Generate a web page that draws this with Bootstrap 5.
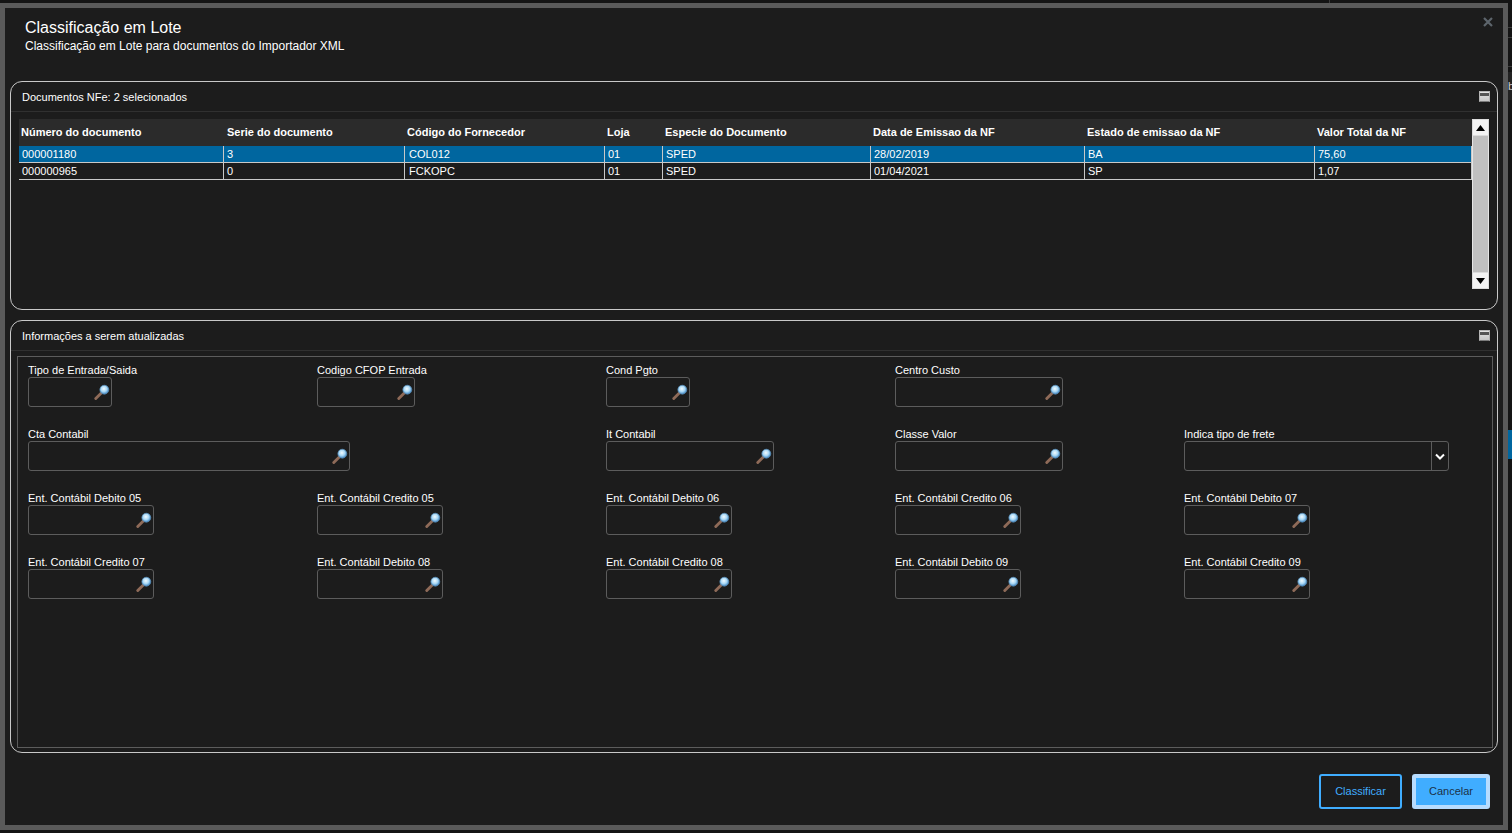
<!DOCTYPE html>
<html lang="pt-BR">
<head>
<meta charset="utf-8">
<title>Classificação em Lote</title>
<link href="https://cdn.jsdelivr.net/npm/bootstrap@5.3.0/dist/css/bootstrap.min.css" rel="stylesheet">
<style>
html,body{height:100%;overflow:hidden}
body{background:#141414;font-family:"Liberation Sans",Arial,sans-serif;color:#fff;font-size:11px;line-height:1}
.behind{position:absolute;background:#3a3a3a}
.behind-blue{right:0;top:430px;width:4px;height:29px;background:#00669f}
.behind-band{right:0;top:72px;width:4px;height:28px;background:#222}
.behind-b{right:0;top:81px;width:4px;height:11px;overflow:hidden;background:none;color:#ccc;font-size:11px}
.behind-line{right:0;top:27px;width:4px;height:1px}
.behind-line1{right:0;top:37px;width:4px;height:1px}
.behind-line2{right:0;top:66px;width:4px;height:1px}
.behind-top{left:1329px;top:0;width:1px;height:3px}
.dlg{position:absolute;left:0;top:3px;width:1508px;height:827px;background:#1c1c1c;border:5px solid #5a5a5a;display:flex;flex-direction:column;padding:0 5px}
.dlg-head{height:73px;padding:10px 0 0 15px;flex:none;position:relative}
.dlg-title{font-size:16px;line-height:18px;margin:0;font-weight:400;color:#fff;padding-top:1px}
.dlg-sub{font-size:12px;line-height:14px;margin-top:2px;color:#fff}
.dlg-x{position:absolute;right:4px;top:8px;width:12px;height:12px;padding:0;border:0;background:none;display:flex}
.pane{background:transparent;border:1px solid #c8c8c8;border-radius:12px;color:#fff;flex:none}
.pane-docs{height:229px;margin-bottom:10px}
.pane-info{height:433px}
.pane-head{height:30px;background:transparent;border:0;border-bottom:1px solid #303030;border-radius:0;padding:2px 6px 0 11px;display:flex;align-items:center;justify-content:space-between;font-size:11px;color:#fff}
.pane-head:first-child{border-radius:12px 12px 0 0}
.pane-min{width:11px;height:11px;background:linear-gradient(#e4e4e4,#c6c6c6);border:1px solid #b5b5b5;border-bottom-color:#7a7a7a;margin:-2px 1px 0 0;display:block}
.pane-min span{display:block;height:3px;margin-top:1px;background:#555}
.docs-wrap{display:flex;align-items:flex-start;padding:7px 8px 0 8px}
.docs-table{width:1453px;table-layout:fixed;border-collapse:separate;border-spacing:0;margin:0;color:#fff;font-size:11px;flex:none}
.docs-table th{background:#2b2b2b;height:27px;padding:0 2px;font-weight:700;vertical-align:middle;color:#fff;border:0}
.docs-table td{height:17px;padding:0 2px 0 3px;background:#1c1c1c;border:0;border-bottom:1px solid #c8c8c8;border-right:1px solid #c8c8c8;color:#fff;vertical-align:middle}
.docs-table td:nth-child(3){padding-left:4px}
.docs-table th:nth-child(2){padding-left:3px}
.docs-table tr.sel td{background:#00669f}
.scroll{width:17px;height:170px;background:#c0c0c0;display:flex;flex-direction:column;justify-content:space-between;flex:none}
.scroll-btn{height:17px;background:#f4f4f4;border:1px solid #ddd;display:flex;align-items:center;justify-content:center}
.scroll-gut{flex:1;border-left:1px solid #e5e5e5;border-right:1px solid #e5e5e5}
.frame{margin:5px 4px 0 6px;height:392px;border:1px solid #5c5c5c;padding:5px 10px;display:grid;grid-template-columns:repeat(5,289px);grid-auto-rows:64px}
.fld label{display:block;height:15px;line-height:16px;font-size:11px;color:#fff;white-space:nowrap;margin:0}
.fbox{height:30px;background:#1c1c1c;border:1px solid #5c5c5c;border-radius:3px;display:flex;align-items:center;justify-content:flex-end;padding:0 1px 0 0}
.fbox>svg{filter:blur(.3px)}
.w84{width:84px}.w98{width:98px}.w168{width:168px}.w126{width:126px}.w322{width:322px}.w265{width:265px}
.fspan2{grid-column:span 2}
.fselect{justify-content:flex-end;padding:0}
.fcaret{width:17px;height:100%;border-left:1px solid #5c5c5c;display:flex;align-items:center;justify-content:center}
.dlg-foot{flex:1;display:flex;justify-content:flex-end;align-items:flex-start;gap:10px;padding:21px 8px 0 0}
.act{height:35px;font-size:11px;line-height:1;border-radius:3px;padding:0;--bs-btn-font-size:11px}
.act-out{width:83px;background:transparent;border:2px solid #40adff;color:#40adff}
.act-out:hover{background:transparent;color:#40adff;border-color:#40adff}
.act-fill{width:78px;background:#40adff;border:4px solid #b7dcff;color:#1b3147}
.act-fill:hover{background:#40adff;color:#1b3147;border-color:#b7dcff}
</style>
</head>
<body>
<div class="behind behind-top"></div>
<div class="behind behind-line"></div>
<div class="behind behind-line1"></div>
<div class="behind behind-line2"></div>
<div class="behind behind-band"></div>
<div class="behind behind-b">b</div>
<div class="behind behind-blue"></div>
<svg width="0" height="0" class="d-block" aria-hidden="true"><defs>
<radialGradient id="lens" cx="45%" cy="40%" r="60%"><stop offset="0" stop-color="#f2fbff"/><stop offset=".55" stop-color="#a9d8f5"/><stop offset="1" stop-color="#3f86c4"/></radialGradient>
<symbol id="mag" viewBox="0 0 18 18"><path d="M2 16.2 8.2 10" stroke="#8e6a58" stroke-width="3.2" stroke-linecap="round" fill="none"/><circle cx="11.6" cy="6.4" r="5" fill="url(#lens)" stroke="#5d93bd" stroke-width=".8"/></symbol>
</defs></svg>
<div class="dlg">
  <div class="dlg-head">
    <h5 class="dlg-title">Classificação em Lote</h5>
    <div class="dlg-sub">Classificação em Lote para documentos do Importador XML</div>
    <button class="dlg-x" type="button" aria-label="Fechar"><svg width="12" height="12" viewBox="0 0 12 12"><path d="M2 2l8 8M10 2l-8 8" stroke="#5d656c" stroke-width="2.2"/></svg></button>
  </div>
  <div class="card pane pane-docs">
    <div class="card-header pane-head"><span>Documentos NFe: 2 selecionados</span><span class="pane-min"><span></span></span></div>
    <div class="docs-wrap">
      <table class="docs-table">
        <colgroup><col style="width:205px"><col style="width:181px"><col style="width:200px"><col style="width:58px"><col style="width:208px"><col style="width:214px"><col style="width:230px"><col style="width:157px"></colgroup>
        <thead><tr><th>Número do documento</th><th>Serie do documento</th><th>Código do Fornecedor</th><th>Loja</th><th>Especie do Documento</th><th>Data de Emissao da NF</th><th>Estado de emissao da NF</th><th>Valor Total da NF</th></tr></thead>
        <tbody>
          <tr class="sel"><td>000001180</td><td>3</td><td>COL012</td><td>01</td><td>SPED</td><td>28/02/2019</td><td>BA</td><td>75,60</td></tr>
          <tr><td>000000965</td><td>0</td><td>FCKOPC</td><td>01</td><td>SPED</td><td>01/04/2021</td><td>SP</td><td>1,07</td></tr>
        </tbody>
      </table>
      <div class="scroll">
        <div class="scroll-btn"><svg width="9" height="6" viewBox="0 0 9 6"><path d="M4.5 0 9 6H0z" fill="#000"/></svg></div>
        <div class="scroll-gut"></div>
        <div class="scroll-btn"><svg width="9" height="6" viewBox="0 0 9 6"><path d="M0 0h9L4.500 6z" fill="#000"/></svg></div>
      </div>
    </div>
  </div>
  <div class="card pane pane-info">
    <div class="card-header pane-head"><span>Informações a serem atualizadas</span><span class="pane-min"><span></span></span></div>
    <div class="frame">
      <div class="fld"><label>Tipo de Entrada/Saida</label><div class="fbox w84"><svg width="16" height="16"><use href="#mag"/></svg></div></div>
      <div class="fld"><label>Codigo CFOP Entrada</label><div class="fbox w98"><svg width="16" height="16"><use href="#mag"/></svg></div></div>
      <div class="fld"><label>Cond Pgto</label><div class="fbox w84"><svg width="16" height="16"><use href="#mag"/></svg></div></div>
      <div class="fld fspan2"><label>Centro Custo</label><div class="fbox w168"><svg width="16" height="16"><use href="#mag"/></svg></div></div>

      <div class="fld fspan2"><label>Cta Contabil</label><div class="fbox w322"><svg width="16" height="16"><use href="#mag"/></svg></div></div>
      <div class="fld"><label>It Contabil</label><div class="fbox w168"><svg width="16" height="16"><use href="#mag"/></svg></div></div>
      <div class="fld"><label>Classe Valor</label><div class="fbox w168"><svg width="16" height="16"><use href="#mag"/></svg></div></div>
      <div class="fld"><label>Indica tipo de frete</label><div class="fbox fselect w265"><span class="fcaret"><svg width="10" height="7" viewBox="0 0 10 7"><path d="M1 1.500 5 5.500 9 1.500" fill="none" stroke="#fff" stroke-width="2"/></svg></span></div></div>

      <div class="fld"><label>Ent. Contábil Debito 05</label><div class="fbox w126"><svg width="16" height="16"><use href="#mag"/></svg></div></div>
      <div class="fld"><label>Ent. Contábil Credito 05</label><div class="fbox w126"><svg width="16" height="16"><use href="#mag"/></svg></div></div>
      <div class="fld"><label>Ent. Contábil Debito 06</label><div class="fbox w126"><svg width="16" height="16"><use href="#mag"/></svg></div></div>
      <div class="fld"><label>Ent. Contábil Credito 06</label><div class="fbox w126"><svg width="16" height="16"><use href="#mag"/></svg></div></div>
      <div class="fld"><label>Ent. Contábil Debito 07</label><div class="fbox w126"><svg width="16" height="16"><use href="#mag"/></svg></div></div>

      <div class="fld"><label>Ent. Contábil Credito 07</label><div class="fbox w126"><svg width="16" height="16"><use href="#mag"/></svg></div></div>
      <div class="fld"><label>Ent. Contábil Debito 08</label><div class="fbox w126"><svg width="16" height="16"><use href="#mag"/></svg></div></div>
      <div class="fld"><label>Ent. Contábil Credito 08</label><div class="fbox w126"><svg width="16" height="16"><use href="#mag"/></svg></div></div>
      <div class="fld"><label>Ent. Contábil Debito 09</label><div class="fbox w126"><svg width="16" height="16"><use href="#mag"/></svg></div></div>
      <div class="fld"><label>Ent. Contábil Credito 09</label><div class="fbox w126"><svg width="16" height="16"><use href="#mag"/></svg></div></div>
    </div>
  </div>
  <div class="dlg-foot">
    <button type="button" class="btn act act-out">Classificar</button>
    <button type="button" class="btn act act-fill">Cancelar</button>
  </div>
</div>
<script src="https://cdn.jsdelivr.net/npm/bootstrap@5.3.0/dist/js/bootstrap.bundle.min.js"></script>
</body>
</html>
